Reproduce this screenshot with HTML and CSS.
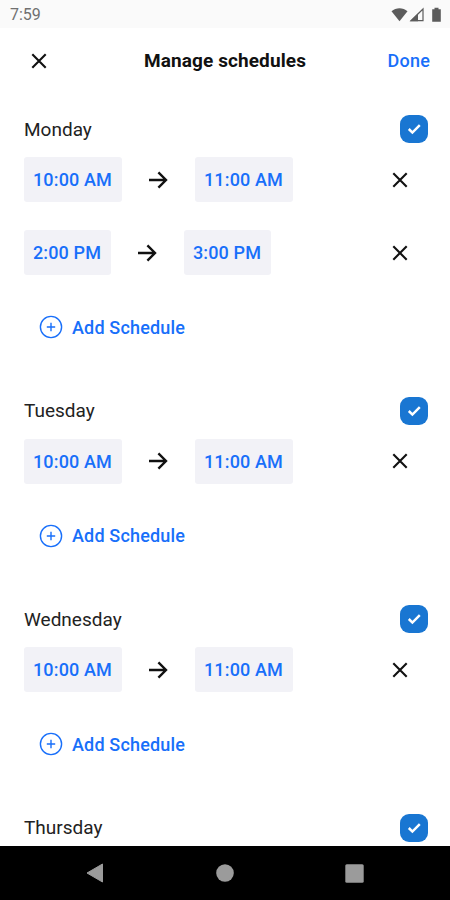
FILE: index.html
```html
<!DOCTYPE html>
<html lang="en">
<head>
    <meta charset="UTF-8">
    <meta name="viewport" content="width=device-width, initial-scale=1.0">
    <title>Manage schedules</title>
    <link rel="stylesheet" href="styles.css">
</head>
<body>
    <!-- Shared icons -->
    <svg class="icon-defs" width="0" height="0">
        <symbol id="icon-close" viewBox="0 0 16 16">
            <path d="M1.3 1.3L14.7 14.7M14.7 1.3L1.3 14.7" fill="none" stroke="currentColor" stroke-width="2.1"/>
        </symbol>
        <symbol id="icon-arrow" viewBox="0 0 20 20">
            <path d="M1 10H18M10.400 2.400L18 10L10.400 17.600" fill="none" stroke="currentColor" stroke-width="2.4"/>
        </symbol>
        <symbol id="icon-check" viewBox="0 0 28 28">
            <path d="M8.8 14L12.400 17.600L19.800 10.200" fill="none" stroke="currentColor" stroke-width="2.5"/>
        </symbol>
        <symbol id="icon-add" viewBox="0 0 24 24">
            <circle cx="12" cy="12" r="10.6" fill="none" stroke="currentColor" stroke-width="1.4"/>
            <path d="M12 7.8V16.2M7.8 12H16.2" fill="none" stroke="currentColor" stroke-width="1.4"/>
        </symbol>
    </svg>

    <div class="screen">
        <div class="status-bar">
            <span class="clock">7:59</span>
            <svg class="status-icons" width="52" height="16" viewBox="0 0 52 16">
                <path d="M1.500 4.2C6 0.1 13 0.1 17.500 4.200L9.500 14.200Z" fill="#5c5c5c"/>
                <path d="M21 13.700L33 2V13.700Z" fill="none" stroke="#5c5c5c" stroke-width="1.2"/>
                <path d="M20 14.200L28 6.500V14.200Z" fill="#5c5c5c"/>
                <path d="M42.200 2.200H44.500V0.800H48.500V2.200H50.800V14.800H42.200Z" fill="#5c5c5c"/>
            </svg>
        </div>

        <header class="header">
            <button class="icon-btn"><svg class="close"><use href="#icon-close"/></svg></button>
            <h1>Manage schedules</h1>
            <button class="done-btn">Done</button>
        </header>

        <main class="days">
            <section class="day">
                <div class="day-header">
                    <h2>Monday</h2>
                    <span class="checkbox"><svg><use href="#icon-check"/></svg></span>
                </div>
                <div class="schedule">
                    <button class="time">10:00 AM</button>
                    <svg class="arrow"><use href="#icon-arrow"/></svg>
                    <button class="time">11:00 AM</button>
                    <button class="icon-btn remove"><svg class="close"><use href="#icon-close"/></svg></button>
                </div>
                <div class="schedule">
                    <button class="time short">2:00 PM</button>
                    <svg class="arrow"><use href="#icon-arrow"/></svg>
                    <button class="time short">3:00 PM</button>
                    <button class="icon-btn remove"><svg class="close"><use href="#icon-close"/></svg></button>
                </div>
                <button class="add-btn"><svg><use href="#icon-add"/></svg><span>Add Schedule</span></button>
            </section>

            <section class="day">
                <div class="day-header">
                    <h2>Tuesday</h2>
                    <span class="checkbox"><svg><use href="#icon-check"/></svg></span>
                </div>
                <div class="schedule">
                    <button class="time">10:00 AM</button>
                    <svg class="arrow"><use href="#icon-arrow"/></svg>
                    <button class="time">11:00 AM</button>
                    <button class="icon-btn remove"><svg class="close"><use href="#icon-close"/></svg></button>
                </div>
                <button class="add-btn"><svg><use href="#icon-add"/></svg><span>Add Schedule</span></button>
            </section>

            <section class="day">
                <div class="day-header">
                    <h2>Wednesday</h2>
                    <span class="checkbox"><svg><use href="#icon-check"/></svg></span>
                </div>
                <div class="schedule">
                    <button class="time">10:00 AM</button>
                    <svg class="arrow"><use href="#icon-arrow"/></svg>
                    <button class="time">11:00 AM</button>
                    <button class="icon-btn remove"><svg class="close"><use href="#icon-close"/></svg></button>
                </div>
                <button class="add-btn"><svg><use href="#icon-add"/></svg><span>Add Schedule</span></button>
            </section>

            <section class="day">
                <div class="day-header">
                    <h2>Thursday</h2>
                    <span class="checkbox"><svg><use href="#icon-check"/></svg></span>
                </div>
            </section>
        </main>

        <nav class="nav-bar">
            <svg width="18" height="20" viewBox="0 0 18 20"><path d="M1 10L16.500 1V19Z" fill="#9b9b9b" stroke="#9b9b9b" stroke-linejoin="round"/></svg>
            <svg width="18" height="18" viewBox="0 0 18 18"><circle cx="9" cy="9" r="8.800" fill="#9b9b9b"/></svg>
            <svg width="19" height="19" viewBox="0 0 19 19"><rect x="0.300" y="0.300" width="18.400" height="18.400" rx="1.500" fill="#9b9b9b"/></svg>
        </nav>
    </div>
</body>
</html>
```

FILE: styles.css
```css
* {
    box-sizing: border-box;
}

body {
    margin: 0;
    font-family: Roboto, sans-serif;
    background-color: #fff;
    color: #111;
}

button {
    font-family: inherit;
    border: none;
    padding: 0;
    background: none;
    cursor: pointer;
}

svg {
    display: block;
    flex-shrink: 0;
}

.icon-defs {
    display: none;
}

.screen {
    display: flex;
    flex-direction: column;
    width: 450px;
    height: 900px;
    overflow: hidden;
}

.status-bar {
    display: flex;
    justify-content: space-between;
    align-items: center;
    height: 28px;
    padding: 1px 8px 0 10px;
    background-color: #fafafa;
    color: #707070;
    flex-shrink: 0;
}

.clock {
    font-size: 16px;
    line-height: 28px;
}

.header {
    display: grid;
    grid-template-columns: 1fr auto 1fr;
    align-items: center;
    height: 65px;
    padding: 0 20px 0 31px;
    flex-shrink: 0;
}

.header h1 {
    margin: 0 11px 0 0;
    font-size: 19px;
    font-weight: 700;
    letter-spacing: 0.1px;
}

.done-btn {
    justify-self: end;
    font-size: 18px;
    font-weight: 500;
    letter-spacing: 0.2px;
    color: #186ffa;
}

.icon-btn {
    color: #111;
}

.close {
    width: 16px;
    height: 16px;
}

.days {
    flex: 1;
    min-height: 0;
    padding: 22px 22px 0 24px;
    overflow: hidden;
}

.day {
    padding-bottom: 46px;
}

.day-header {
    display: flex;
    justify-content: space-between;
    align-items: center;
    height: 28px;
    margin-bottom: 14px;
}

.day-header h2 {
    margin: 0;
    font-size: 19px;
    font-weight: 400;
    color: #222;
}

.checkbox {
    width: 28px;
    height: 28px;
    border-radius: 9px;
    background-color: #1976d2;
    color: #fff;
}

.checkbox svg {
    width: 28px;
    height: 28px;
}

.schedule {
    display: flex;
    align-items: center;
    height: 45px;
    margin-bottom: 28.4px;
}

.time {
    width: 98px;
    height: 45px;
    padding-right: 1px;
    border-radius: 3px;
    background-color: #f2f2f7;
    color: #186ffa;
    font-size: 18px;
    font-weight: 500;
    letter-spacing: 0.15px;
}

.time.short {
    width: 87px;
}

.arrow {
    width: 20px;
    height: 20px;
    margin: 0 27px 0 26px;
}

.remove {
    margin-left: auto;
    margin-right: 20px;
}

.add-btn {
    display: flex;
    align-items: center;
    gap: 9px;
    height: 47px;
    margin-left: 15px;
    color: #186ffa;
    font-size: 18px;
    font-weight: 500;
    letter-spacing: 0.17px;
}

.add-btn svg {
    width: 24px;
    height: 24px;
}

.nav-bar {
    display: flex;
    justify-content: space-between;
    align-items: center;
    height: 54px;
    padding: 0 86px;
    background-color: #000;
    flex-shrink: 0;
}
```
